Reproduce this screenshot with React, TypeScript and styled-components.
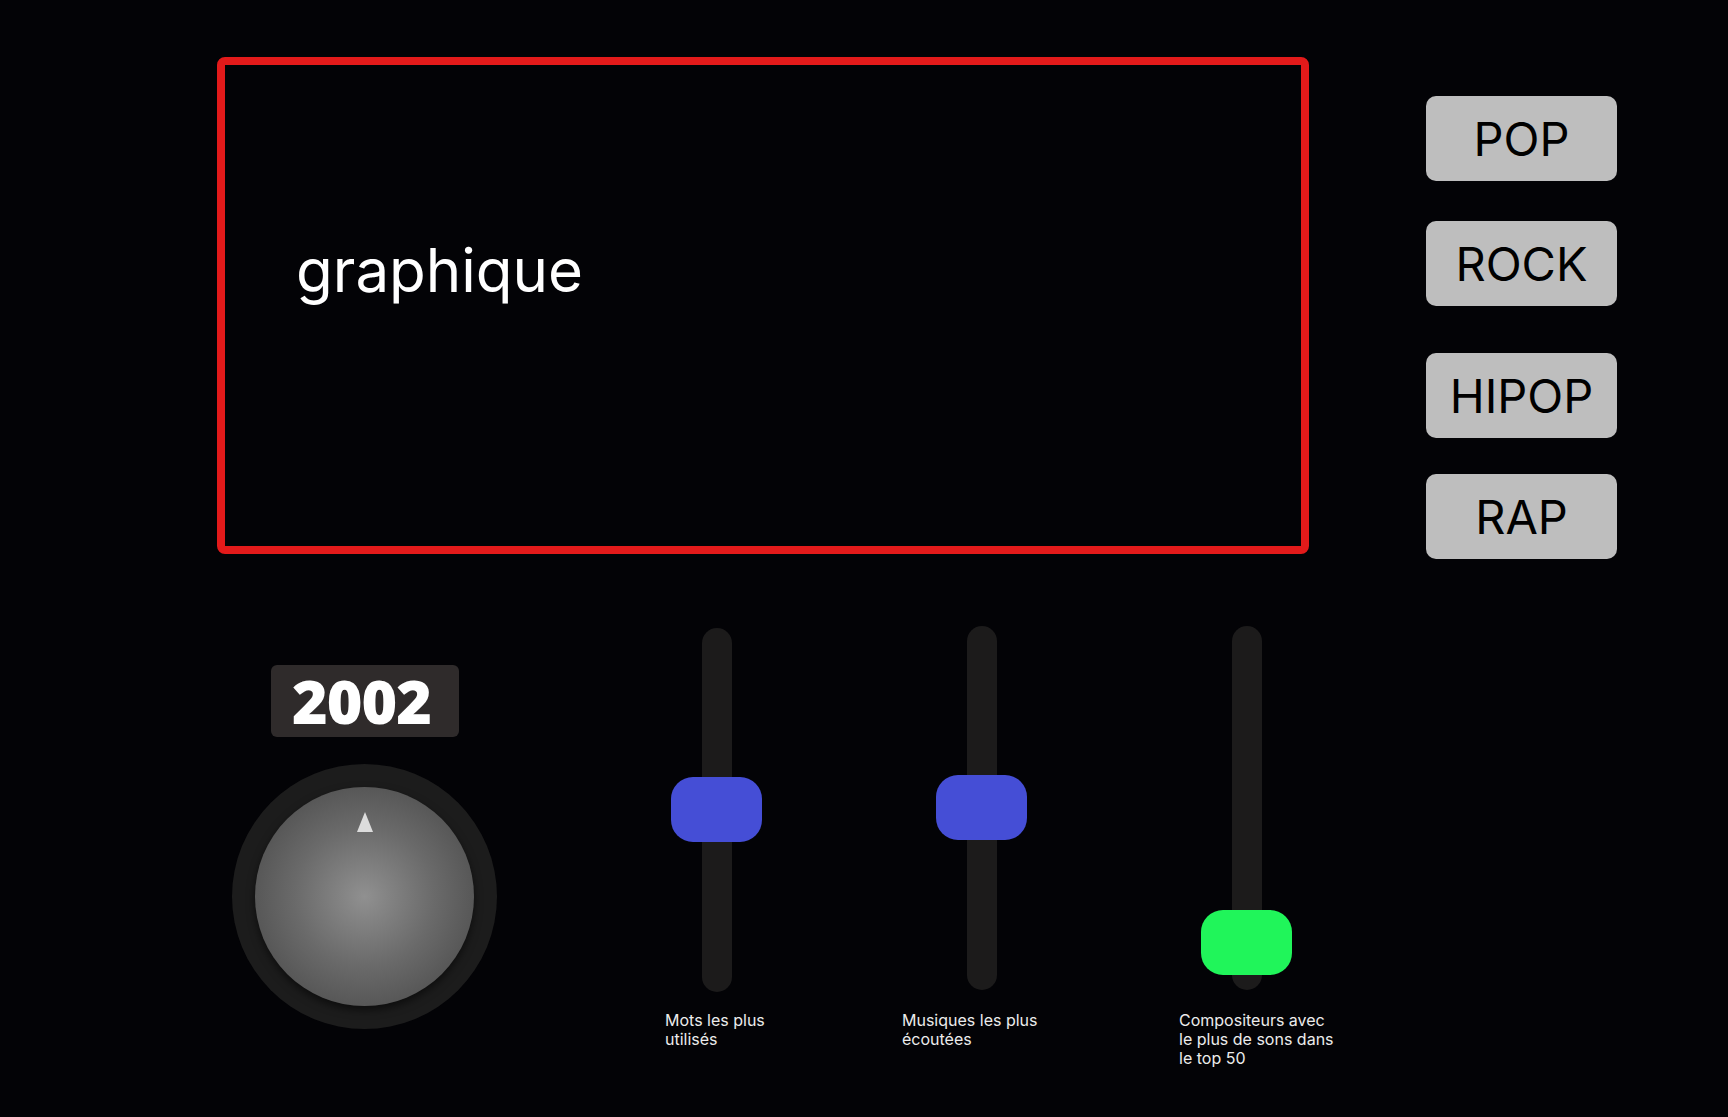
import React from 'react';
import styled, { createGlobalStyle } from 'styled-components';

const GlobalStyle = createGlobalStyle`
  html, body {
    margin: 0;
    padding: 0;
    background: #030306;
  }
  body {
    font-family: Inter, "Noto Sans", "Liberation Sans", sans-serif;
    color: #fff;
  }
  * {
    box-sizing: border-box;
  }
`;

const Page = styled.div`
  min-height: 100vh;
  padding: 57px 0 0 217px;
`;

const TopRow = styled.div`
  display: flex;
  align-items: flex-start;
  gap: 117px;
  height: 497px;
`;

const ChartFrame = styled.section`
  width: 1092px;
  height: 497px;
  border: 8px solid #e31a1a;
  border-radius: 8px;
  padding: 175px 0 0 71px;
`;

const ChartTitle = styled.h2`
  margin: 0;
  font-size: 60px;
  font-weight: 400;
  line-height: 60px;
  color: #fff;
`;

const GenreList = styled.nav`
  display: flex;
  flex-direction: column;
  padding-top: 39px;
`;

const GenreButton = styled.button<{ $space: number }>`
  width: 191px;
  height: 85px;
  margin-top: ${(p) => p.$space}px;
  border: none;
  border-radius: 10px;
  background: #bebebe;
  color: #000;
  font-family: Inter, "Noto Sans", sans-serif;
  font-size: 47px;
  font-weight: 400;
  cursor: pointer;
`;

const ControlRow = styled.div`
  display: flex;
  align-items: flex-start;
  gap: 174px;
  margin-top: 72px;
  padding-left: 15px;
`;

const KnobGroup = styled.div`
  display: flex;
  flex-direction: column;
  align-items: center;
  width: 265px;
  margin-top: 39px;
  gap: 27px;
`;

const YearBadge = styled.div`
  width: 188px;
  height: 72px;
  border-radius: 6px;
  background: #2f2b2b;
  color: #fff;
  font-family: "Open Sans", "Noto Sans", sans-serif;
  font-weight: 800;
  font-size: 61px;
  line-height: 72px;
  text-align: center;
  letter-spacing: -1px;
  padding-right: 6px;
`;

const KnobRing = styled.div`
  width: 265px;
  height: 265px;
  border-radius: 50%;
  background: #1c1c1c;
  display: flex;
  align-items: center;
  justify-content: center;
`;

const KnobFace = styled.div`
  position: relative;
  width: 219px;
  height: 219px;
  border-radius: 50%;
  background: radial-gradient(circle at 50% 50%, #909090 0%, #6a6a6a 45%, #424242 100%);
  box-shadow: 0 4px 8px rgba(0, 0, 0, 0.55);
`;

const Pointer = styled.svg`
  position: absolute;
  top: 25px;
  left: 50%;
  transform: translateX(-50%);
`;

const SliderGroup = styled.div<{ $drop: number }>`
  display: flex;
  flex-direction: column;
  width: 91px;
  margin-top: ${(p) => p.$drop}px;
`;

const Fader = styled.div`
  position: relative;
  width: 91px;
  height: 364px;
`;

const Track = styled.div`
  width: 30px;
  height: 100%;
  margin: 0 auto;
  border-radius: 15px;
  background: #1c1b1b;
`;

const Thumb = styled.div<{ $color: string }>`
  position: absolute;
  left: 0;
  width: 91px;
  height: 65px;
  border-radius: 22px;
  background: ${(p) => p.$color};
`;

const FaderLabel = styled.p<{ $gap: number; $shift: number }>`
  margin: ${(p) => p.$gap}px 0 0 ${(p) => p.$shift}px;
  font-size: 16px;
  line-height: 19px;
  color: #ececec;
  white-space: nowrap;
`;

const genres = [
  { name: 'POP', space: 0 },
  { name: 'ROCK', space: 40 },
  { name: 'HIPOP', space: 47 },
  { name: 'RAP', space: 36 },
];

const faders = [
  { lines: ['Mots les plus', 'utilisés'], top: 149, drop: 2, gap: 19, color: '#454ed6', shift: -6 },
  { lines: ['Musiques les plus', 'écoutées'], top: 149, drop: 0, gap: 21, color: '#454ed6', shift: -34 },
  { lines: ['Compositeurs avec', 'le plus de sons dans', 'le top 50'], top: 284, drop: 0, gap: 21, color: '#20f55a', shift: -22 },
];

export default function App() {
  return (
    <Page>
      <GlobalStyle />
      <TopRow>
        <ChartFrame>
          <ChartTitle>graphique</ChartTitle>
        </ChartFrame>
        <GenreList>
          {genres.map((g) => (
            <GenreButton key={g.name} $space={g.space}>
              {g.name}
            </GenreButton>
          ))}
        </GenreList>
      </TopRow>

      <ControlRow>
        <KnobGroup>
          <YearBadge>2002</YearBadge>
          <KnobRing>
            <KnobFace>
              <Pointer width="16" height="20" viewBox="0 0 16 20">
                <polygon points="8,0 16,20 0,20" fill="#dcdcdc" />
              </Pointer>
            </KnobFace>
          </KnobRing>
        </KnobGroup>

        {faders.map((f, i) => (
          <SliderGroup key={i} $drop={f.drop}>
            <Fader>
              <Track />
              <Thumb $color={f.color} style={{ top: f.top }} />
            </Fader>
            <FaderLabel $gap={f.gap} $shift={f.shift}>
              {f.lines.map((l, j) => (
                <React.Fragment key={j}>
                  {j > 0 && <br />}
                  {l}
                </React.Fragment>
              ))}
            </FaderLabel>
          </SliderGroup>
        ))}
      </ControlRow>
    </Page>
  );
}
